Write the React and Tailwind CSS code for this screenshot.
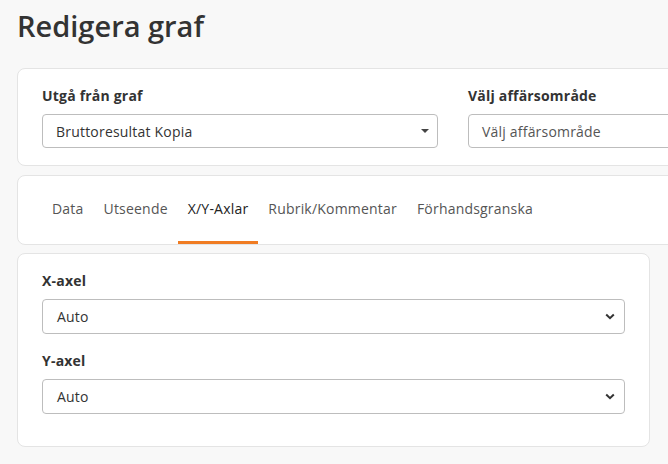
import { useState } from 'react';

const tabs = ['Data', 'Utseende', 'X/Y-Axlar', 'Rubrik/Kommentar', 'Förhandsgranska'];

function Chevron() {
  return (
    <svg width="10" height="7" viewBox="0 0 10 7" className="text-[#333]">
      <path d="M1.2 1.5 L5 5.2 L8.8 1.5" fill="none" stroke="currentColor" strokeWidth="2" />
    </svg>
  );
}

function AxisSelect({ label }) {
  return (
    <div>
      <div className="text-[14px] leading-5 font-bold text-[#333]">{label}</div>
      <div className="mt-2 h-[35px] flex items-center justify-between rounded border border-[#bdbdbd] bg-white pl-[14px] pr-[9px] text-[14px] text-[#333]">
        <span>Auto</span>
        <Chevron />
      </div>
    </div>
  );
}

export default function App() {
  const [active, setActive] = useState('X/Y-Axlar');

  return (
    <div
      className="w-[668px] h-[464px] overflow-hidden bg-[#f8f8f8] pl-[17px] text-[#333] tracking-[0.2px]"
      style={{ fontFamily: '"Open Sans", "Noto Sans", sans-serif' }}
    >
      <h1 className="pt-[8px] h-[68px] text-[29px] leading-9 font-semibold tracking-[0px] text-[#333]">Redigera graf</h1>

      <div className="w-[900px] rounded-lg border border-[#e4e4e4] bg-white px-6 pt-[17px] pb-[17px]">
        <div className="flex gap-[30px]">
          <div className="w-[396px]">
            <div className="text-[14px] leading-5 font-bold">Utgå från graf</div>
            <div className="mt-2 h-[34px] flex items-center justify-between rounded border border-[#bdbdbd] pl-[13px] pr-[8px] text-[14px]">
              <span>Bruttoresultat Kopia</span>
              <span className="w-0 h-0 border-l-[4px] border-r-[4px] border-t-[4px] border-l-transparent border-r-transparent border-t-[#444]" />
            </div>
          </div>
          <div className="w-[396px]">
            <div className="text-[14px] leading-5 font-bold">Välj affärsområde</div>
            <div className="mt-2 h-[34px] flex items-center rounded border border-[#bdbdbd] pl-[13px] text-[14px] text-[#555]">
              Välj affärsområde
            </div>
          </div>
        </div>
      </div>

      <div className="mt-[9px] w-[900px] h-[70px] rounded-lg border border-[#e4e4e4] bg-white px-6 flex">
        {tabs.map((t) => (
          <button
            key={t}
            onClick={() => setActive(t)}
            className={
              'h-full px-[10px] text-[14px] border-b-[3px] ' +
              (active === t ? 'border-[#f07c22] text-[#222]' : 'border-transparent text-[#555]')
            }
          >
            {t}
          </button>
        ))}
      </div>

      <div className="mt-[8px] w-[633px] rounded-lg border border-[#e4e4e4] bg-white px-6 pt-[17px] pb-[32px]">
        <AxisSelect label="X-axel" />
        <div className="mt-[17px]">
          <AxisSelect label="Y-axel" />
        </div>
      </div>
    </div>
  );
}
